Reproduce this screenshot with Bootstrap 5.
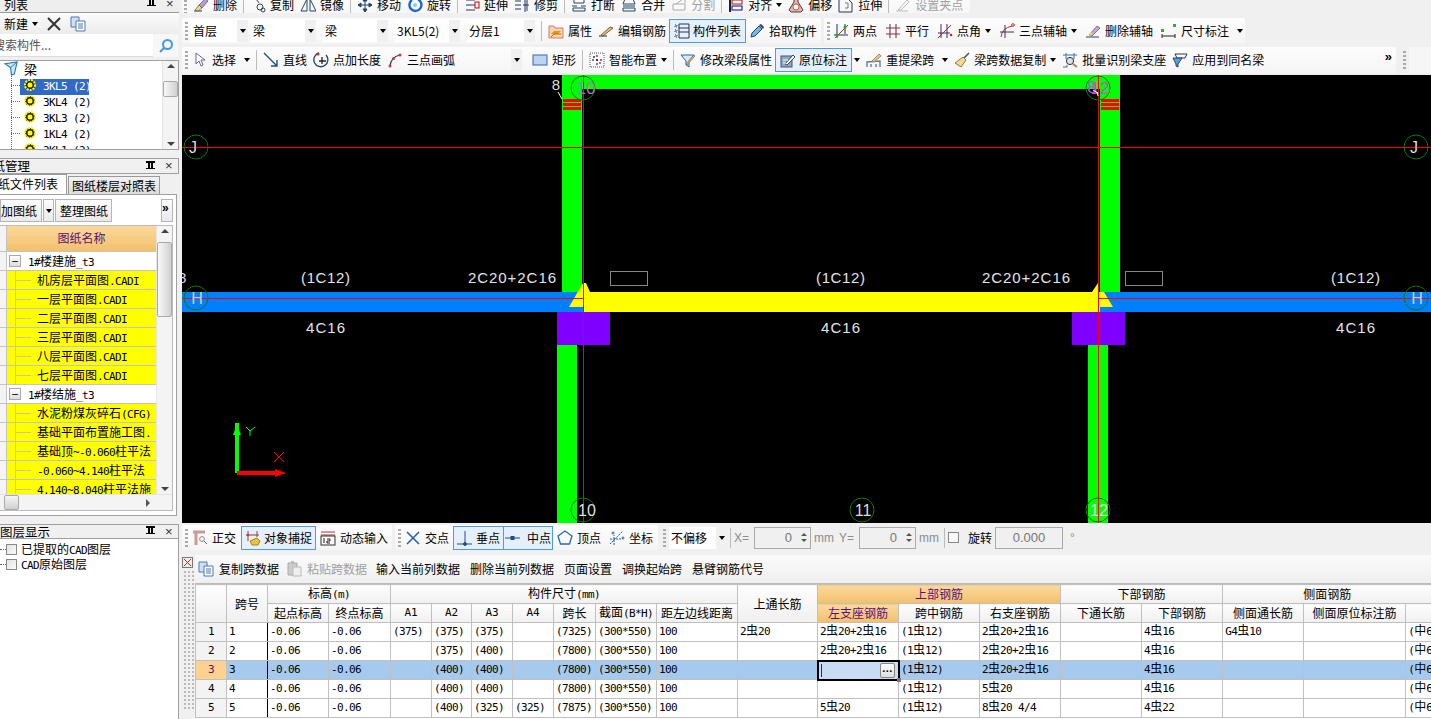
<!DOCTYPE html>
<html lang="zh">
<head>
<meta charset="UTF-8">
<title>梁 原位标注</title>
<link rel="stylesheet" href="https://cdn.jsdelivr.net/npm/bootstrap@5.3.0/dist/css/bootstrap.min.css">
<style>
html,body{height:719px;overflow:hidden}
body{background:#f0f0f0;color:#000;font:12px/16px "Noto Sans CJK SC",sans-serif}
.m{font-family:"DejaVu Sans Mono","Noto Sans CJK SC",monospace;font-size:11px;letter-spacing:-.62px}
.ic{width:16px;height:16px;flex:none;display:block}
.arr{width:0;height:0;border:3px solid transparent;border-top:4px solid #000;border-bottom:0;flex:none}
.grip{width:3px;height:18px;flex:none;background:repeating-linear-gradient(#aaa 0 2px,transparent 2px 4px)}
.vsep{width:1px;height:20px;background:#bbb;flex:none}
.side{width:179px;flex:none}
.ttl{height:15px;background:#f0f0f0;border:1px solid #a0a0a0;border-left:0;padding-right:2px;overflow:hidden;line-height:14px}
.ttl .cut{flex:1;overflow:hidden;white-space:nowrap}
.ttl2{height:16px;margin-top:8px;font-size:12.5px}
.ttl2 .cut{margin-left:-20px}
.ttl3{height:15px;margin-top:8px;font-size:12.5px}
.ttl3 .cut{margin-left:0}
.pin{width:9px;height:11px;position:relative;margin-right:10px;border-top:2px solid #000}
.pin::before{content:"";display:block;width:5px;height:5px;margin-left:2px;border:1px solid #000;border-width:0 2px}
.pin::after{content:"";display:block;width:9px;height:1px;background:#000}
.clx{font:13px/12px "Liberation Sans",sans-serif;color:#333;width:11px}
.top-cut{height:13px;overflow:hidden;border:0;border-bottom:1px solid #999;background:#eee}
.top-cut>*{margin-top:-2px}
.bar-new{height:21px;background:linear-gradient(#fbfbfb,#ececec)}
.srch{height:24px;margin-bottom:2px}
.srch .box{width:153px;height:23px;background:#fff;color:#555;overflow:hidden;white-space:nowrap;line-height:22px;border-bottom:1px solid #ddd;text-indent:-7px}
.srch .btnbox{width:25px;height:23px;background:#f7f7f7}
.tree{height:90px;background:#fff;border:1px solid #a0a0a0;border-left:0;position:relative;overflow:hidden}
.tree-body{flex:1;position:relative;overflow:hidden}
.tnode{height:16px;line-height:16px;padding-left:30px;white-space:nowrap;position:relative}
.tnode::before{content:"";position:absolute;left:11px;top:8px;width:9px;border-top:1px dotted #666}
.tnode .ic{width:12px;height:12px;position:absolute;left:24px;top:2px}
.tnode .lbl{padding-left:13px}
.tnode.on .lbl{display:inline-block;background:#316ac5;color:#fff;width:69px;margin-left:-10px;padding-left:23px}
.tnode.root{padding-left:24px;font-size:13px}
.tnode.root::before{display:none}
.tnode.root .ic{width:15px;height:15px;left:4px;top:0}
.tnode.root .lbl{padding-left:0}
.tvline{position:absolute;left:11px;top:12px;bottom:0;border-left:1px dotted #666}
.sbar{width:16px;flex:none;background:#f4f4f4;border-left:1px solid #e4e4e4;position:relative}
.sb-up,.sb-dn{position:absolute;left:4px;width:0;height:0;border:4px solid transparent}
.sb-up{top:3px;border-bottom:4px solid #444;border-top:0}
.sb-dn{bottom:3px;border-top:4px solid #444;border-bottom:0}
.sb-th{position:absolute;left:0;right:0;background:linear-gradient(90deg,#f8f8f8,#d0d0d0);border:1px solid #aaa;border-radius:2px}
.th-tree{top:20px;height:16px}
.th-dwg{top:16px;height:75px}
.tabs.nav-tabs{height:20px;border-bottom:0;margin:0;flex-wrap:nowrap;--bs-nav-tabs-border-radius:0}
.tabs .nav-link{padding:0 3px;height:20px;line-height:19px;color:#000;font-size:12px;border:1px solid #999;border-bottom:0;background:#e6e6e6;white-space:nowrap;margin:0}
.tabs .nav-link.active{background:#fff;height:21px;border-color:#999;border-left:0;color:#000;width:67px;overflow:hidden;direction:rtl;z-index:2;line-height:18px;padding:0 8px 0 0}
.tabs .nav-link.off{margin-top:2px;height:18px;line-height:17px;width:92px;margin-left:1px;background:linear-gradient(#f2f2f2,#dcdcdc)}
.dpanel{height:322px;background:#fff;border:1px solid #a0a0a0;border-left:0;padding-top:4px;margin-right:2px}
.gbtn{height:23px;background:linear-gradient(#fcfcfc,#eaeaea);border:1px solid #b5b5b5;line-height:21px;padding:0;white-space:nowrap;overflow:hidden;margin-right:1px}
.gb-add{width:42px;direction:rtl;padding-right:4px}
.gb-dd{width:11px}
.gb-arr{width:57px;padding-left:4px}
.gb-more{width:12px;font:bold 12px/16px "Liberation Sans",sans-serif;margin-right:3px}
.dtable{height:286px;margin-top:3px;width:173px;border:1px solid #bbb;border-left:0;position:relative;overflow:hidden}
.dwrap{flex:1;overflow:hidden;height:268px}
.sbar-dwg{height:268px}
.drow{height:19px;line-height:18px;border-bottom:1px solid #c4c4c4;white-space:nowrap;position:relative;overflow:hidden;display:flex}
.drow .rh{width:7px;flex:none;background:#f4f4f4;border-right:1px solid #c4c4c4;height:18px}
.drow.head{height:26px;line-height:24px;color:#5a0e80;text-align:center}
.drow.head .rh{height:26px}
.drow.head .nm{flex:1;background:linear-gradient(#fbd99c,#f3c06a)}
.drow.par .nm{padding-left:21px;position:relative;background:#fff;flex:1}
.drow.par .nm::before{content:"−";position:absolute;left:2px;top:3px;width:12px;height:12px;border:1px solid #aaa;background:linear-gradient(#fff,#ddd);line-height:9px;text-align:center;color:#000}
.drow.leaf .nm{flex:1;background:#ff0;padding-left:30px;position:relative}
.drow.leaf .nm::before{content:"";position:absolute;left:8px;top:-1px;bottom:-1px;border-left:1px solid #c8c8a0}
.drow.leaf .nm::after{content:"";position:absolute;left:8px;top:9px;width:16px;border-top:1px solid #c8c8a0}
.hsc{height:16px;background:#f4f4f4;border-top:1px solid #e4e4e4;position:relative}
.hsc::before{content:"";position:absolute;left:4px;top:0;width:15px;height:15px;background:linear-gradient(#f6f6f6,#d0d0d0);border:1px solid #aaa;border-radius:2px}
.hsc::after{content:"";position:absolute;left:146px;top:4px;border:4px solid transparent;border-left:4px solid #555;border-right:0}
.laybox{flex:1;background:#fff;border-right:1px solid #a0a0a0;padding-top:3px}
.lay{height:15px;line-height:15px;padding-left:6px;white-space:nowrap;position:relative;display:flex;gap:4px;align-items:center}
.lay::before{content:"";position:absolute;left:0;top:7px;width:6px;border-top:1px dotted #666}
.ck{width:11px;height:11px;border:1px solid #888;background:linear-gradient(135deg,#e2e2e2,#fafafa);flex:none;display:block}
.ck-plain{background:#f8f8f8}
.main{width:1249px;margin-left:3px;flex:none}
.tbar{height:26px;gap:3px}
.tbar-a{margin-top:5px}
.tbar-b{margin-top:3px}
.tgrp{height:100%;background:linear-gradient(#fdfdfd,#f5f5f5);border-radius:2px;gap:8px;padding-left:3px;white-space:nowrap}
.ti{display:flex;align-items:center;gap:4px;height:100%;white-space:nowrap;flex:none}
.ti.dis{color:#a0a0a0}
.ti.act{border:1px solid #4a9be8;background:#e6f0fa;padding:0 4px;height:24px;gap:3px}
.combo{background:#fff;height:22px;display:flex;align-items:center;justify-content:space-between;padding-left:2px;flex:none;line-height:22px}
.combo .dd{width:11px;height:100%;background:#f0f0f0;display:flex;align-items:center;justify-content:center}
.rcut{height:13px;overflow:hidden;background:#f0f0f0}
.rcut .tgrp{margin-top:-7px;height:24px;width:788px;padding-left:2px;gap:6px}
.g-obj{width:639px;gap:3px}
.g-axis{width:421px}
.g-axis .grip{margin-right:-5px}
.g-draw{width:1214px;gap:6px}
.g-draw .grip{margin-right:-2px}
.cb57{width:57px}.cb65{width:65px}.cb68{width:68px}.cb58{width:58px}
.sp4{margin-left:4px}
.sp3x{margin:0 3px}
.lt3{margin-left:3px}
.combo-gap{width:63px;margin-left:-2px;background:transparent;justify-content:flex-end}
.lm3{margin-left:-3px}
.lm4{margin-left:-4px}
.more{font:bold 13px "Liberation Sans",sans-serif;margin:-8px 4px 0 auto}
.fill-w{background:#f6f6f6}
.cvs{display:block;width:1249px;height:448px;background:#000;margin-top:2px}
.cvs text{font-family:"Liberation Sans",sans-serif}
.snap{height:25px;gap:3px;margin:2px 0 3px}
.g-snap1{width:210px;gap:4px}
.g-snap2{width:263px;gap:0}
.g-snap1 .act{padding:0 3px;margin-left:1px}
.act.per{padding:0 3px;margin-left:4px}
.act.midp{padding:0 1px;gap:6px;margin-left:-1px}
.g-opts{gap:3px;padding-left:2px}
.greyt{color:#8c8c8c;font-family:"Liberation Sans",sans-serif;font-size:12px}
.gx{width:17px}.gmm{width:22px}
.spinb{width:57px;height:22px;border:1px solid #aaa;color:#777;font-family:"Liberation Sans",sans-serif;font-size:13px;display:flex;align-items:center;justify-content:flex-end;padding-right:3px;gap:9px;flex:none}
.spinb .sp{display:flex;flex-direction:column;gap:3px}
.spinb .up{width:0;height:0;border:3px solid transparent;border-bottom:3px solid #555;border-top:0}
.spinb .dw{width:0;height:0;border:3px solid transparent;border-top:3px solid #555;border-bottom:0}
.spin-rot{width:68px;justify-content:center;padding:0}
.rot-lbl{margin-left:6px}
.gridp{margin-top:2px;height:164px}
.gstrip{width:13px;flex:none;padding-top:2px}
.gstrip .dots{height:140px;margin:2px 1px 0;background:radial-gradient(#bbb 1px,transparent 1.2px) 0 0/4px 4px}
.gbar{height:28px;background:linear-gradient(#fbfbfb,#efefef);gap:10px;padding-left:3px}
.gbar .ti{gap:5px}
.gbar .pst{margin-left:-3px}
.gbar .inp{margin-left:-1px}
.gwrap{width:1236px;background:#fff;border-top:1px solid #bbb;overflow:hidden;height:136px}
table.rtb{width:1236px;table-layout:fixed;border-collapse:collapse;margin:0;--bs-table-bg:transparent;--bs-table-border-color:#c0c0c0;color:#000}
.c26{width:26px}.c31{width:31px}.c40{width:40px}.c41{width:41px}.c42{width:42px}.c61{width:61px}.c62{width:62px}.c80{width:80px}.c81{width:81px}.c102{width:102px}
.rtb td,.rtb th{height:19px;padding:0 0 0 2px;border:1px solid #c0c0c0;font-weight:400;line-height:16px;white-space:nowrap;overflow:hidden;vertical-align:middle;font-family:"DejaVu Sans Mono","Noto Sans CJK SC",monospace;font-size:11px;letter-spacing:-.62px;color:#000}
.rtb thead th{background:linear-gradient(#fdfdfd,#f0f0f0);text-align:center;font:12px/16px "Noto Sans CJK SC",sans-serif;letter-spacing:0;padding:0}
.rtb thead th.m{font-family:"DejaVu Sans Mono",monospace;font-size:11px}
.rtb thead th.hot{background:linear-gradient(#fbd99c,#f3c06a);color:#5a0e80}
.rtb th.rn{background:#f3f3f3;text-align:center;padding:0}
.rtb tr.sel td{background:#a6caee}
.rtb tr.sel th.rn{background:#fcd28e;color:#5a0e80}
.rtb tbody td:nth-child(2){border-right:1px solid #000}
.rb{font:12px/12px "Noto Sans CJK SC",sans-serif;letter-spacing:0}
.rtb tr.sel td.ed{background:#c8dcf4;outline:2px solid #000;outline-offset:-1px;position:relative;overflow:visible;padding:0}
.edcaret{position:absolute;left:3px;top:3px;height:13px;border-left:1px solid #333}
.eddot{position:absolute;right:3px;top:2px;width:15px;height:15px;background:linear-gradient(#fff,#ddd);border:1px solid #888;border-radius:2px;text-align:center;font:bold 11px/9px "Liberation Sans",sans-serif;letter-spacing:.5px;color:#000}
.edh{position:absolute;right:-3px;bottom:-3px;width:4px;height:4px;background:#777;z-index:2}
</style>
</head>
<body class="d-flex">

<svg width="0" height="0" class="position-absolute">
  <symbol id="i-del" viewBox="0 0 16 16"><path d="M1 14h8" stroke="#333"/><path d="M2 13l4-5 3 3-4 3z" fill="#f5d98a" stroke="#555" stroke-width=".7"/><path d="M6 8l6-6 3 2-6 7z" fill="#b89ad8" stroke="#555" stroke-width=".7"/></symbol>
  <symbol id="i-copy" viewBox="0 0 16 16" fill="none" stroke="#345"><path d="M1 2h5l3 4"/><circle cx="10" cy="10" r="3"/><circle cx="13" cy="13" r="2"/></symbol>
  <symbol id="i-mir" viewBox="0 0 16 16" fill="none" stroke="#246"><path d="M7 2L1 14h6zM10 2l6 12h-6z"/></symbol>
  <symbol id="i-move" viewBox="0 0 16 16" fill="#246" stroke="#246"><path d="M8 1v14M1 8h14" fill="none"/><path d="M8 1l-2 3h4zM8 15l-2-3h4zM1 8l3-2v4zM15 8l-3-2v4z"/></symbol>
  <symbol id="i-rot" viewBox="0 0 16 16" fill="none"><path d="M5 3a6 6 0 1 0 6-.5" stroke="#1a66cc" stroke-width="2.4"/><circle cx="8" cy="8" r="2" fill="#8cf"/></symbol>
  <symbol id="i-ext" viewBox="0 0 16 16" fill="none" stroke="#236"><path d="M2 3h9M2 8h9M2 13h9"/><rect x="11" y="5" width="4" height="6" stroke="#c00"/></symbol>
  <symbol id="i-trim" viewBox="0 0 16 16" fill="none" stroke="#236"><path d="M1 4h6M1 8h6M1 12h6M11 1v14M13 2v12M9 8h6"/></symbol>
  <symbol id="i-brk" viewBox="0 0 16 16" fill="none" stroke="#246"><path d="M3 1v5h10V1M1 9h5M10 9h5M2 14h12V11H2z"/></symbol>
  <symbol id="i-mrg" viewBox="0 0 16 16" fill="none" stroke="#246"><path d="M4 2l-2 5h12l-2-5zM2 9h12M2 14h12v-3H2z"/></symbol>
  <symbol id="i-spl" viewBox="0 0 16 16" fill="none" stroke="#aaa"><path d="M2 13h12V7H2zM5 7l7-5M9 2h5v4"/></symbol>
  <symbol id="i-ali" viewBox="0 0 16 16" fill="none"><path d="M2 1v14" stroke="#123" stroke-width="2"/><rect x="4" y="3" width="10" height="4" stroke="#c00" fill="#fff"/><rect x="4" y="9" width="10" height="4" stroke="#00a" fill="#fff"/></symbol>
  <symbol id="i-off" viewBox="0 0 16 16"><path d="M6 1h4v4l5 8-2 2H3l-2-2 5-8z" fill="#f4b0a0" stroke="#345"/><circle cx="8" cy="10" r="3" fill="#fff" stroke="#c54"/></symbol>
  <symbol id="i-str" viewBox="0 0 16 16" fill="none" stroke="#235"><path d="M1 15V2h9l4 4v9z"/><path d="M7 6h3v5H7" stroke="#777"/></symbol>
  <symbol id="i-grp" viewBox="0 0 16 16" fill="none" stroke="#bbb"><path d="M1 14h12M3 13l9-10 2 2-8 8z"/></symbol>
  <symbol id="i-prop" viewBox="0 0 16 16"><path d="M1 3h5l1 2h8v10H1z" fill="#f7d9a0" stroke="#c78"/><path d="M3 11l3-3h7l-3 3z" fill="#e89030"/><path d="M3 14l3-3h7" fill="none" stroke="#c60"/></symbol>
  <symbol id="i-edit" viewBox="0 0 16 16" fill="none"><path d="M1 13h8" stroke="#222"/><path d="M3 12l9-8 3 1-10 8z" fill="#e3c070" stroke="#543" stroke-width=".8"/></symbol>
  <symbol id="i-list" viewBox="0 0 16 16" fill="none" stroke="#235"><path d="M1 2h2v2H1zM1 7h2v2H1zM1 12h2v2H1z" stroke-dasharray="1 1"/><path d="M5 1h10v14H5zM5 5h10M5 9h10"/></symbol>
  <symbol id="i-pick" viewBox="0 0 16 16"><path d="M2 14l1-4 7-7 3 3-7 7z" fill="#7ab4ee" stroke="#246"/><path d="M10 2l2-1 3 3-1 2z" fill="#246"/></symbol>
  <symbol id="i-2pt" viewBox="0 0 16 16" fill="none"><path d="M4 1v14M1 12h14" stroke="#236"/><path d="M12 1v10" stroke="#236"/><path d="M2 15L15 2" stroke="#c22"/><circle cx="4" cy="12" r="1.5" fill="#2a2"/><circle cx="12" cy="4" r="1.5" fill="#2a2"/></symbol>
  <symbol id="i-par" viewBox="0 0 16 16" fill="none" stroke="#236"><path d="M5 1v14M11 1v14" stroke="#336"/><path d="M1 5h14M1 11h14" stroke="#b22"/></symbol>
  <symbol id="i-ang" viewBox="0 0 16 16" fill="none"><path d="M4 1v14M10 1v14M1 10h12" stroke="#336"/><path d="M1 15L14 2" stroke="#c22"/><circle cx="14" cy="12" r="1.3" fill="#c22"/></symbol>
  <symbol id="i-arx" viewBox="0 0 16 16" fill="none"><path d="M2 14Q3 5 13 3" stroke="#c22"/><path d="M6 2v13M1 9h14" stroke="#336"/><circle cx="14" cy="2" r="1.3" fill="#fff" stroke="#c22"/></symbol>
  <symbol id="i-dax" viewBox="0 0 16 16" fill="none"><path d="M1 14h13" stroke="#246"/><path d="M4 12l8-9 3 2-8 8z" fill="#c9a4d8" stroke="#555" stroke-width=".7"/><path d="M4 12l2-3 2 2-3 2z" fill="#f0d070"/></symbol>
  <symbol id="i-dim" viewBox="0 0 16 16" fill="none"><rect x="0" y="6" width="3" height="3" fill="#3a3"/><rect x="12" y="1" width="3" height="3" fill="#3a3"/><path d="M1 11v4M14 11v4M1 13h13" stroke="#222"/></symbol>
  <symbol id="i-sel" viewBox="0 0 16 16"><path d="M4 1v11l3-3 2 5 2-1-2-5h4z" fill="#fff" stroke="#668"/></symbol>
  <symbol id="i-line" viewBox="0 0 16 16" fill="none" stroke="#1d4f8c" stroke-width="1.4"><path d="M1 1l13 13M8 14h6V8"/></symbol>
  <symbol id="i-plen" viewBox="0 0 16 16" fill="none" stroke="#246" stroke-width="1.3"><path d="M6 1a7 7 0 1 0 7 2"/><path d="M9 5v7M6 9h7" stroke="#222"/><circle cx="5" cy="2" r="1.5" fill="#c22" stroke="none"/></symbol>
  <symbol id="i-arc" viewBox="0 0 16 16" fill="none"><path d="M3 14Q4 5 13 3" stroke="#234" stroke-width="1.2"/><circle cx="3" cy="14" r="1.5" fill="#d33"/><circle cx="6.5" cy="6.5" r="1.5" fill="#d33"/><circle cx="13" cy="3" r="1.5" fill="#d33"/></symbol>
  <symbol id="i-rect" viewBox="0 0 16 16"><rect x="1" y="3" width="14" height="10" fill="#bcd4f4" stroke="#3a64a8"/></symbol>
  <symbol id="i-smart" viewBox="0 0 16 16" fill="none"><rect x="1" y="1" width="14" height="14" stroke="#556" stroke-dasharray="1 1"/><path d="M8 3v10M3 8h10" stroke="#000" stroke-dasharray="2 2"/><circle cx="5" cy="5" r="1" fill="#333"/><circle cx="11" cy="11" r="1" fill="#c33"/></symbol>
  <symbol id="i-mod" viewBox="0 0 16 16" fill="none"><path d="M1 3h13L9 9v6l-3-2V9z" fill="#d8eaf8" stroke="#269"/><path d="M6 12l8-9 1 1-8 9z" fill="#e8c070" stroke="#654" stroke-width=".6"/></symbol>
  <symbol id="i-inp" viewBox="0 0 16 16"><rect x="1" y="4" width="11" height="11" fill="#8fa8c8" stroke="#456"/><path d="M5 12l8-9 2 2-8 8z" fill="#fff" stroke="#345"/><path d="M3 8h5M3 11h3" stroke="#fff"/></symbol>
  <symbol id="i-rel" viewBox="0 0 16 16" fill="none"><path d="M1 15v-5l13-1v6M5 15v-3M10 15v-3" stroke="#5a7ea8" stroke-width="1.4"/><path d="M6 9l7-7 2 2-7 6z" fill="#e8c890" stroke="#a86"/></symbol>
  <symbol id="i-brs" viewBox="0 0 16 16"><path d="M15 1l-6 6" stroke="#555" stroke-width="1.6"/><path d="M9 5l3 3-5 7-6-4z" fill="#efdc90" stroke="#8a7a40"/></symbol>
  <symbol id="i-bat" viewBox="0 0 16 16" fill="none"><path d="M1 3h14M4 1v6M12 1v6" stroke="#37a"/><circle cx="8" cy="9" r="3.6" fill="#dde" stroke="#333"/><path d="M11 12l4 3" stroke="#a85" stroke-width="2"/><path d="M1 15h4v-2" stroke="#37a"/></symbol>
  <symbol id="i-app" viewBox="0 0 16 16" fill="none"><path d="M3 2h12l-2 4H5z" stroke="#235"/><path d="M1 6h9L6 12v3l-2-1v-2z" fill="#5a9ee0" stroke="#246"/></symbol>
  <symbol id="i-ort" viewBox="0 0 16 16" fill="none"><path d="M1 2h12M4 2v13" stroke="#c99" stroke-width="3"/><circle cx="10" cy="9" r="2.4" stroke="#889"/><path d="M12 11l3 3" stroke="#666"/></symbol>
  <symbol id="i-sna" viewBox="0 0 16 16" fill="none"><path d="M3 1v10M12 1v6M1 5h13" stroke="#844"/><circle cx="3" cy="5" r="1.3" fill="#c33"/><path d="M7 15l-2-4 7-3 3 3-2 4z" fill="#e8c04a" stroke="#a80"/></symbol>
  <symbol id="i-dyn" viewBox="0 0 16 16" fill="none"><path d="M1 2h14M1 5h14" stroke="#a33"/><rect x="1" y="6" width="14" height="9" stroke="#333"/><path d="M4 8v5M7 9h3v2H7v2h3" stroke="#222"/></symbol>
  <symbol id="i-crs" viewBox="0 0 16 16" stroke="#1d5fa8" stroke-width="1.5"><path d="M2 2l12 12M14 2L2 14"/></symbol>
  <symbol id="i-per" viewBox="0 0 16 16" fill="#1d4f8c" stroke="#1d4f8c"><path d="M0 14h15M8 1v13" fill="none"/><circle cx="8" cy="14" r="1.5"/></symbol>
  <symbol id="i-mid" viewBox="0 0 16 16" fill="#1d4f8c" stroke="#1d4f8c"><path d="M0 8h15" fill="none"/><rect x="6" y="6.5" width="3" height="3"/></symbol>
  <symbol id="i-ver" viewBox="0 0 16 16" fill="none" stroke="#2a6ab0" stroke-width="1.3"><path d="M8 1l7 5-2.5 8h-9L1 6z"/></symbol>
  <symbol id="i-crd" viewBox="0 0 16 16" fill="none" stroke="#1d5fa8"><path d="M1 14L14 1M1 9h11M5 15V5" stroke-dasharray="2 1"/><circle cx="4" cy="3" r="1"/><circle cx="14" cy="8" r="1"/></symbol>
  <symbol id="i-cp2" viewBox="0 0 16 16"><path d="M1 1h8v10H1z" fill="#cfe0f6" stroke="#4a78b8"/><path d="M6 5h9v10H6z" fill="#fff" stroke="#4a78b8"/><path d="M8 8h5M8 10h5M8 12h5" stroke="#4a78b8"/></symbol>
  <symbol id="i-pst" viewBox="0 0 16 16"><path d="M2 2h9v12H2z" fill="#ccc" stroke="#aaa"/><path d="M5 0h3v3H5z" fill="#bbb"/><path d="M7 6h8v9H7z" fill="#eee" stroke="#bbb"/></symbol>
  <symbol id="i-pt" viewBox="0 0 12 12"><circle cx="6" cy="6" r="5" fill="#222" stroke="#ff0" stroke-width="2" stroke-dasharray="2 1"/><circle cx="6" cy="6" r="2.5" fill="#ff0"/></symbol>
  <symbol id="i-fold" viewBox="0 0 16 16"><path d="M1 3l13-2-3 13-3 1-1-8z" fill="#cfe8f8" stroke="#1e78b8" stroke-width="1.2"/><path d="M7 7l7-6" stroke="#1e78b8"/></symbol>
  <symbol id="i-mag" viewBox="0 0 16 16" fill="none" stroke="#3d9ae8" stroke-width="2"><circle cx="9.5" cy="6.5" r="4.5"/><path d="M6 10l-4 4"/></symbol>
  <symbol id="i-x" viewBox="0 0 16 16" stroke="#333" stroke-width="2"><path d="M2 2l12 12M14 2L2 14"/></symbol>
</svg>

<!-- left dock panels -->
<aside class="side d-flex flex-column">
  <div class="ttl top-cut d-flex align-items-start">
    <div class="cut ps-1">列表</div><div class="pin"></div><div class="clx">×</div>
  </div>
  <div class="bar-new d-flex align-items-center">
    <span class="ps-1">新建</span><span class="arr ms-1"></span>
    <svg class="ms-2 ic"><use href="#i-x"/></svg>
    <svg class="ms-2 ic"><use href="#i-cp2"/></svg>
  </div>
  <div class="srch d-flex">
    <div class="box">搜索构件...</div>
    <div class="btnbox d-flex align-items-center justify-content-center"><svg class="ic"><use href="#i-mag"/></svg></div>
  </div>
  <div class="tree d-flex">
    <div class="tree-body">
      <div class="tvline"></div>
      <div class="tnode root"><svg class="ic"><use href="#i-fold"/></svg><span class="lbl">梁</span></div>
      <div class="tnode on"><svg class="ic"><use href="#i-pt"/></svg><span class="lbl m">3KL5 (2)</span></div>
      <div class="tnode"><svg class="ic"><use href="#i-pt"/></svg><span class="lbl m">3KL4 (2)</span></div>
      <div class="tnode"><svg class="ic"><use href="#i-pt"/></svg><span class="lbl m">3KL3 (2)</span></div>
      <div class="tnode"><svg class="ic"><use href="#i-pt"/></svg><span class="lbl m">1KL4 (2)</span></div>
      <div class="tnode"><svg class="ic"><use href="#i-pt"/></svg><span class="lbl m">2KL1 (2)</span></div>
    </div>
    <div class="sbar"><span class="sb-up"></span><span class="sb-th th-tree"></span><span class="sb-dn"></span></div>
  </div>
  <div class="ttl ttl2 d-flex align-items-center">
    <div class="cut">图纸管理</div><div class="pin"></div><div class="clx">×</div>
  </div>
  <ul class="nav nav-tabs tabs">
    <li class="nav-item"><span class="nav-link active">图纸文件列表</span></li>
    <li class="nav-item"><span class="nav-link off">图纸楼层对照表</span></li>
  </ul>
  <div class="dpanel">
    <div class="d-flex">
      <div class="gbtn gb-add">加图纸</div>
      <div class="gbtn gb-dd d-flex align-items-center justify-content-center"><span class="arr"></span></div>
      <div class="gbtn gb-arr">整理图纸</div>
      <div class="gbtn gb-more ms-auto">&raquo;</div>
    </div>
    <div class="dtable d-flex flex-column">
      <div class="d-flex">
        <div class="dwrap">
          <div class="drow head"><div class="rh"></div><div class="nm">图纸名称</div></div>
          <div class="drow par"><div class="rh"></div><div class="nm"><span class="m">1#</span>楼建施<span class="m">_t3</span></div></div>
          <div class="drow leaf"><div class="rh"></div><div class="nm">机房层平面图<span class="m">.CADI</span></div></div>
          <div class="drow leaf"><div class="rh"></div><div class="nm">一层平面图<span class="m">.CADI</span></div></div>
          <div class="drow leaf"><div class="rh"></div><div class="nm">二层平面图<span class="m">.CADI</span></div></div>
          <div class="drow leaf"><div class="rh"></div><div class="nm">三层平面图<span class="m">.CADI</span></div></div>
          <div class="drow leaf"><div class="rh"></div><div class="nm">八层平面图<span class="m">.CADI</span></div></div>
          <div class="drow leaf"><div class="rh"></div><div class="nm">七层平面图<span class="m">.CADI</span></div></div>
          <div class="drow par"><div class="rh"></div><div class="nm"><span class="m">1#</span>楼结施<span class="m">_t3</span></div></div>
          <div class="drow leaf"><div class="rh"></div><div class="nm">水泥粉煤灰碎石<span class="m">(CFG)</span></div></div>
          <div class="drow leaf"><div class="rh"></div><div class="nm">基础平面布置施工图<span class="m">.</span></div></div>
          <div class="drow leaf"><div class="rh"></div><div class="nm">基础顶<span class="m">~-0.060</span>柱平法</div></div>
          <div class="drow leaf"><div class="rh"></div><div class="nm"><span class="m">-0.060~4.140</span>柱平法</div></div>
          <div class="drow leaf"><div class="rh"></div><div class="nm"><span class="m">4.140~8.040</span>柱平法施</div></div>
        </div>
        <div class="sbar sbar-dwg"><span class="sb-up"></span><span class="sb-th th-dwg"></span><span class="sb-dn"></span></div>
      </div>
      <div class="hsc"></div>
    </div>
  </div>
  <div class="ttl ttl3 d-flex align-items-center">
    <div class="cut">图层显示</div><div class="pin"></div><div class="clx">×</div>
  </div>
  <div class="laybox">
    <div class="lay"><span class="ck"></span><span>已提取的<span class="m">CAD</span>图层</span></div>
    <div class="lay"><span class="ck"></span><span><span class="m">CAD</span>原始图层</span></div>
  </div>
</aside>

<!-- main area -->
<main class="main d-flex flex-column">
  <div class="rcut">
    <div class="tgrp d-flex align-items-center">
      <span class="grip"></span>
      <span class="ti"><svg class="ic"><use href="#i-del"/></svg>删除</span><span class="vsep"></span>
      <span class="ti"><svg class="ic"><use href="#i-copy"/></svg>复制</span>
      <span class="ti"><svg class="ic"><use href="#i-mir"/></svg>镜像</span><span class="vsep"></span>
      <span class="ti"><svg class="ic"><use href="#i-move"/></svg>移动</span>
      <span class="ti"><svg class="ic"><use href="#i-rot"/></svg>旋转</span><span class="vsep"></span>
      <span class="ti"><svg class="ic"><use href="#i-ext"/></svg>延伸</span>
      <span class="ti"><svg class="ic"><use href="#i-trim"/></svg>修剪</span><span class="vsep"></span>
      <span class="ti"><svg class="ic"><use href="#i-brk"/></svg>打断</span>
      <span class="ti"><svg class="ic"><use href="#i-mrg"/></svg>合并</span>
      <span class="ti dis"><svg class="ic"><use href="#i-spl"/></svg>分割</span><span class="vsep"></span>
      <span class="ti"><svg class="ic"><use href="#i-ali"/></svg>对齐<span class="arr"></span></span>
      <span class="ti"><svg class="ic"><use href="#i-off"/></svg>偏移</span>
      <span class="ti"><svg class="ic"><use href="#i-str"/></svg>拉伸</span><span class="vsep"></span>
      <span class="ti dis"><svg class="ic"><use href="#i-grp"/></svg>设置夹点</span>
    </div>
  </div>

  <div class="tbar tbar-a d-flex">
    <div class="tgrp g-obj d-flex align-items-center">
      <span class="grip"></span>
      <div class="combo cb57"><span>首层</span><span class="dd"><span class="arr"></span></span></div>
      <div class="combo cb65"><span>梁</span><span class="dd"><span class="arr"></span></span></div>
      <div class="combo cb65 sp4"><span>梁</span><span class="dd"><span class="arr"></span></span></div>
      <div class="combo cb65 sp4"><span>3KL5(2)</span><span class="dd"><span class="arr"></span></span></div>
      <div class="combo cb68 sp4"><span>分层1</span><span class="dd"><span class="arr"></span></span></div>
      <span class="vsep sp3x"></span>
      <span class="ti"><svg class="ic"><use href="#i-prop"/></svg>属性</span>
      <span class="ti lt3"><svg class="ic"><use href="#i-edit"/></svg>编辑钢筋</span>
      <span class="ti act"><svg class="ic"><use href="#i-list"/></svg>构件列表</span>
      <span class="ti"><svg class="ic"><use href="#i-pick"/></svg>拾取构件</span>
    </div>
    <div class="tgrp g-axis d-flex align-items-center">
      <span class="grip"></span>
      <span class="ti"><svg class="ic"><use href="#i-2pt"/></svg>两点</span>
      <span class="ti"><svg class="ic"><use href="#i-par"/></svg>平行</span>
      <span class="ti"><svg class="ic"><use href="#i-ang"/></svg>点角<span class="arr"></span></span>
      <span class="ti"><svg class="ic"><use href="#i-arx"/></svg>三点辅轴<span class="arr"></span></span>
      <span class="ti"><svg class="ic"><use href="#i-dax"/></svg>删除辅轴</span>
      <span class="ti"><svg class="ic"><use href="#i-dim"/></svg>尺寸标注<span class="arr ms-1"></span></span>
    </div>
  </div>

  <div class="tbar tbar-b d-flex">
    <div class="tgrp g-draw d-flex align-items-center">
      <span class="grip"></span>
      <span class="ti"><svg class="ic"><use href="#i-sel"/></svg>选择<span class="arr ms-1"></span></span><span class="vsep"></span>
      <span class="ti"><svg class="ic"><use href="#i-line"/></svg>直线</span>
      <span class="ti"><svg class="ic"><use href="#i-plen"/></svg>点加长度</span>
      <span class="ti"><svg class="ic"><use href="#i-arc"/></svg>三点画弧</span>
      <div class="combo combo-gap"><span class="dd"><span class="arr"></span></span></div>
      <span class="ti ms-1"><svg class="ic"><use href="#i-rect"/></svg>矩形</span><span class="vsep"></span>
      <span class="ti"><svg class="ic"><use href="#i-smart"/></svg>智能布置<span class="arr"></span></span><span class="vsep"></span>
      <span class="ti"><svg class="ic"><use href="#i-mod"/></svg>修改梁段属性</span>
      <span class="ti act lm3"><svg class="ic"><use href="#i-inp"/></svg>原位标注</span><span class="arr lm4"></span>
      <span class="ti"><svg class="ic"><use href="#i-rel"/></svg>重提梁跨<span class="arr ms-1"></span></span>
      <span class="ti"><svg class="ic"><use href="#i-brs"/></svg>梁跨数据复制<span class="arr"></span></span>
      <span class="ti"><svg class="ic"><use href="#i-bat"/></svg>批量识别梁支座</span>
      <span class="ti"><svg class="ic"><use href="#i-app"/></svg>应用到同名梁</span>
      <span class="more">&raquo;</span>
    </div>
    <span class="grip align-self-center ms-1"></span>
    <div class="flex-fill fill-w"></div>
  </div>

  <svg class="cvs" viewBox="182 75 1249 448" xmlns="http://www.w3.org/2000/svg">
    <g fill="#0f0">
      <rect x="562" y="75" width="20" height="217"/><rect x="1100" y="75" width="20" height="217"/>
      <rect x="562" y="75" width="558" height="14"/>
      <rect x="557" y="345" width="20" height="178"/><rect x="1088" y="345" width="20" height="178"/>
    </g>
    <rect x="182" y="292" width="1249" height="20" fill="#0080ff"/>
    <rect x="583" y="292" width="517" height="20" fill="#ff0"/>
    <g fill="#7f00ff"><rect x="557" y="312" width="53" height="33"/><rect x="1072" y="312" width="53" height="33"/></g>
    <g fill="#ff0"><path d="M583 283L569 307H583V292H590L586 283z"/><path d="M1098 283L1092 292H1100H1104L1113 307H1098V292z"/></g>
    <g fill="#f00"><rect x="563" y="99" width="18" height="3"/><rect x="563" y="103" width="18" height="3"/><rect x="563" y="107" width="18" height="3"/>
      <rect x="1101" y="99" width="18" height="3"/><rect x="1101" y="103" width="18" height="3"/><rect x="1101" y="107" width="18" height="3"/></g>
    <g stroke="#f00" stroke-width="1"><path d="M182 147.5H1431M182 298.5H583M1098 298.5H1431M583.5 75V523M1098.5 75V523"/></g>
    <g fill="none" stroke="#888"><rect x="610.5" y="271.5" width="37" height="14"/><rect x="1125.5" y="271.5" width="37" height="14"/></g>
    <g fill="none" stroke="#0a7a0a"><circle cx="196" cy="147" r="12"/><circle cx="1416" cy="147" r="12"/><circle cx="196" cy="298" r="12"/><circle cx="1416" cy="298" r="12"/><circle cx="583" cy="88" r="12"/><circle cx="1098" cy="88" r="12"/><circle cx="583" cy="510" r="12"/><circle cx="862" cy="510" r="12"/><circle cx="1098" cy="510" r="12"/></g>
    <g fill="#e4e4e4" font-size="15">
      <text x="301" y="283" textLength="49">(1C12)</text><text x="816" y="283" textLength="49">(1C12)</text><text x="1331" y="283" textLength="49">(1C12)</text>
      <text x="468" y="283" textLength="88">2C20+2C16</text><text x="982" y="283" textLength="88">2C20+2C16</text>
      <text x="306" y="333" textLength="39">4C16</text><text x="821" y="333" textLength="39">4C16</text><text x="1336" y="333" textLength="39">4C16</text>
    </g>
    <g fill="#ddd" font-size="16" text-anchor="middle">
      <text x="193" y="153">J</text><text x="1414" y="153">J</text><text x="197" y="304" fill="#ccc">H</text><text x="1417" y="304" fill="#ccc">H</text>
      <text x="587" y="516">10</text><text x="863" y="516">11</text><text x="1099" y="516">12</text>
    </g>
    <g font-size="17" text-anchor="middle"><text x="586" y="94" fill="#b070c0">10</text><text x="1100" y="94" fill="#c050d8">12</text><text x="1092" y="93" fill="#c050d8">8</text></g>
    <text x="556" y="90" font-size="15" fill="#ddd" text-anchor="middle">8</text>
    <text x="178" y="283" font-size="15" fill="#ddd">8</text>
    <path d="M558 92L562 99" stroke="#fff" fill="none"/><path d="M1093 90l5 3M1097 92l1 4" stroke="#fff" fill="none"/>
    <rect x="235" y="423" width="4" height="50" fill="#0f0"/><path d="M237 424l4 11h-8z" fill="#0f0"/>
    <rect x="237" y="471" width="42" height="4" fill="#f00"/><path d="M286 473l-11-4v8z" fill="#f00"/>
    <path d="M246 427l4 4 5-4M250 431v5" stroke="#0f0" fill="none"/><path d="M274 452l10 10M284 452l-10 10" stroke="#f00" fill="none"/>
  </svg>

  <div class="snap d-flex">
    <div class="tgrp g-snap1 d-flex align-items-center">
      <span class="grip"></span>
      <span class="ti"><svg class="ic"><use href="#i-ort"/></svg>正交</span>
      <span class="ti act"><svg class="ic"><use href="#i-sna"/></svg>对象捕捉</span>
      <span class="ti"><svg class="ic"><use href="#i-dyn"/></svg>动态输入</span>
    </div>
    <div class="tgrp g-snap2 d-flex align-items-center">
      <span class="grip"></span>
      <span class="ti ms-1"><svg class="ic"><use href="#i-crs"/></svg>交点</span>
      <span class="ti act per"><svg class="ic"><use href="#i-per"/></svg>垂点</span>
      <span class="ti act midp"><svg class="ic"><use href="#i-mid"/></svg>中点</span>
      <span class="ti ms-1"><svg class="ic"><use href="#i-ver"/></svg>顶点</span>
      <span class="ti ms-2"><svg class="ic"><use href="#i-crd"/></svg>坐标</span>
    </div>
    <div class="g-opts d-flex align-items-center flex-fill">
      <span class="grip"></span>
      <div class="combo cb58"><span>不偏移</span><span class="dd"><span class="arr"></span></span></div>
      <span class="vsep"></span><span class="greyt gx">X=</span>
      <div class="spinb"><span>0</span><span class="sp"><span class="up"></span><span class="dw"></span></span></div>
      <span class="greyt gmm">mm</span>
      <span class="greyt gx">Y=</span>
      <div class="spinb"><span>0</span><span class="sp"><span class="up"></span><span class="dw"></span></span></div>
      <span class="greyt gmm">mm</span><span class="vsep"></span>
      <span class="ck ck-plain"></span>
      <span class="rot-lbl">旋转</span>
      <div class="spinb spin-rot">0.000</div>
      <span class="greyt ms-1">°</span>
    </div>
  </div>

  <div class="gridp d-flex">
    <div class="gstrip">
      <svg width="11" height="11" viewBox="0 0 11 11" class="d-block"><rect x=".5" y=".5" width="10" height="10" fill="#eee" stroke="#777"/><path d="M2 2l7 7M9 2l-7 7" stroke="#a33"/></svg>
      <div class="dots"></div>
    </div>
    <div>
      <div class="gbar d-flex align-items-center">
        <span class="ti"><svg class="ic"><use href="#i-cp2"/></svg>复制跨数据</span>
        <span class="ti dis pst"><svg class="ic"><use href="#i-pst"/></svg>粘贴跨数据</span>
        <span class="ti inp">输入当前列数据</span>
        <span class="ti">删除当前列数据</span>
        <span class="ti">页面设置</span>
        <span class="ti">调换起始跨</span>
        <span class="ti">悬臂钢筋代号</span>
      </div>
      <div class="gwrap">
        <table class="table table-bordered rtb">
          <colgroup>
            <col class="c31"><col class="c41"><col class="c61"><col class="c62"><col class="c41"><col class="c40"><col class="c41"><col class="c41"><col class="c42"><col class="c61"><col class="c81"><col class="c80"><col class="c81"><col class="c81"><col class="c81"><col class="c81"><col class="c81"><col class="c81"><col class="c102"><col class="c26">
          </colgroup>
          <thead>
            <tr>
              <th rowspan="2"></th><th rowspan="2">跨号</th><th colspan="2">标高<span class="m">(m)</span></th><th colspan="7">构件尺寸<span class="m">(mm)</span></th>
              <th rowspan="2">上通长筋</th><th colspan="3" class="hot">上部钢筋</th><th colspan="2">下部钢筋</th><th colspan="3">侧面钢筋</th>
            </tr>
            <tr>
              <th>起点标高</th><th>终点标高</th><th class="m">A1</th><th class="m">A2</th><th class="m">A3</th><th class="m">A4</th><th>跨长</th><th>截面<span class="m">(B*H)</span></th><th>距左边线距离</th>
              <th class="hot">左支座钢筋</th><th>跨中钢筋</th><th>右支座钢筋</th><th>下通长筋</th><th>下部钢筋</th><th>侧面通长筋</th><th>侧面原位标注筋</th><th></th>
            </tr>
          </thead>
          <tbody>
            <tr><th class="rn">1</th><td>1</td><td>-0.06</td><td>-0.06</td><td>(375)</td><td>(375)</td><td>(375)</td><td></td><td>(7325)</td><td>(300*550)</td><td>100</td><td>2<span class="rb">虫</span>20</td><td>2<span class="rb">虫</span>20+2<span class="rb">虫</span>16</td><td>(1<span class="rb">虫</span>12)</td><td>2<span class="rb">虫</span>20+2<span class="rb">虫</span>16</td><td></td><td>4<span class="rb">虫</span>16</td><td>G4<span class="rb">虫</span>10</td><td></td><td>(<span class="rb">中</span>6</td></tr>
            <tr><th class="rn">2</th><td>2</td><td>-0.06</td><td>-0.06</td><td></td><td>(375)</td><td>(400)</td><td></td><td>(7800)</td><td>(300*550)</td><td>100</td><td></td><td>2<span class="rb">虫</span>20+2<span class="rb">虫</span>16</td><td>(1<span class="rb">虫</span>12)</td><td>2<span class="rb">虫</span>20+2<span class="rb">虫</span>16</td><td></td><td>4<span class="rb">虫</span>16</td><td></td><td></td><td>(<span class="rb">中</span>6</td></tr>
            <tr class="sel"><th class="rn">3</th><td>3</td><td>-0.06</td><td>-0.06</td><td></td><td>(400)</td><td>(400)</td><td></td><td>(7800)</td><td>(300*550)</td><td>100</td><td></td><td class="ed"><span class="edcaret"></span><span class="eddot">...</span><span class="edh"></span></td><td>(1<span class="rb">虫</span>12)</td><td>2<span class="rb">虫</span>20+2<span class="rb">虫</span>16</td><td></td><td>4<span class="rb">虫</span>16</td><td></td><td></td><td>(<span class="rb">中</span>6</td></tr>
            <tr><th class="rn">4</th><td>4</td><td>-0.06</td><td>-0.06</td><td></td><td>(400)</td><td>(400)</td><td></td><td>(7800)</td><td>(300*550)</td><td>100</td><td></td><td></td><td>(1<span class="rb">虫</span>12)</td><td>5<span class="rb">虫</span>20</td><td></td><td>4<span class="rb">虫</span>16</td><td></td><td></td><td>(<span class="rb">中</span>6</td></tr>
            <tr><th class="rn">5</th><td>5</td><td>-0.06</td><td>-0.06</td><td></td><td>(400)</td><td>(325)</td><td>(325)</td><td>(7875)</td><td>(300*550)</td><td>100</td><td></td><td>5<span class="rb">虫</span>20</td><td>(1<span class="rb">虫</span>12)</td><td>8<span class="rb">虫</span>20 4/4</td><td></td><td>4<span class="rb">虫</span>22</td><td></td><td></td><td>(<span class="rb">中</span>6</td></tr>
          </tbody>
        </table>
      </div>
    </div>
  </div>
</main>

<script src="https://cdn.jsdelivr.net/npm/bootstrap@5.3.0/dist/js/bootstrap.bundle.min.js"></script>
</body>
</html>
